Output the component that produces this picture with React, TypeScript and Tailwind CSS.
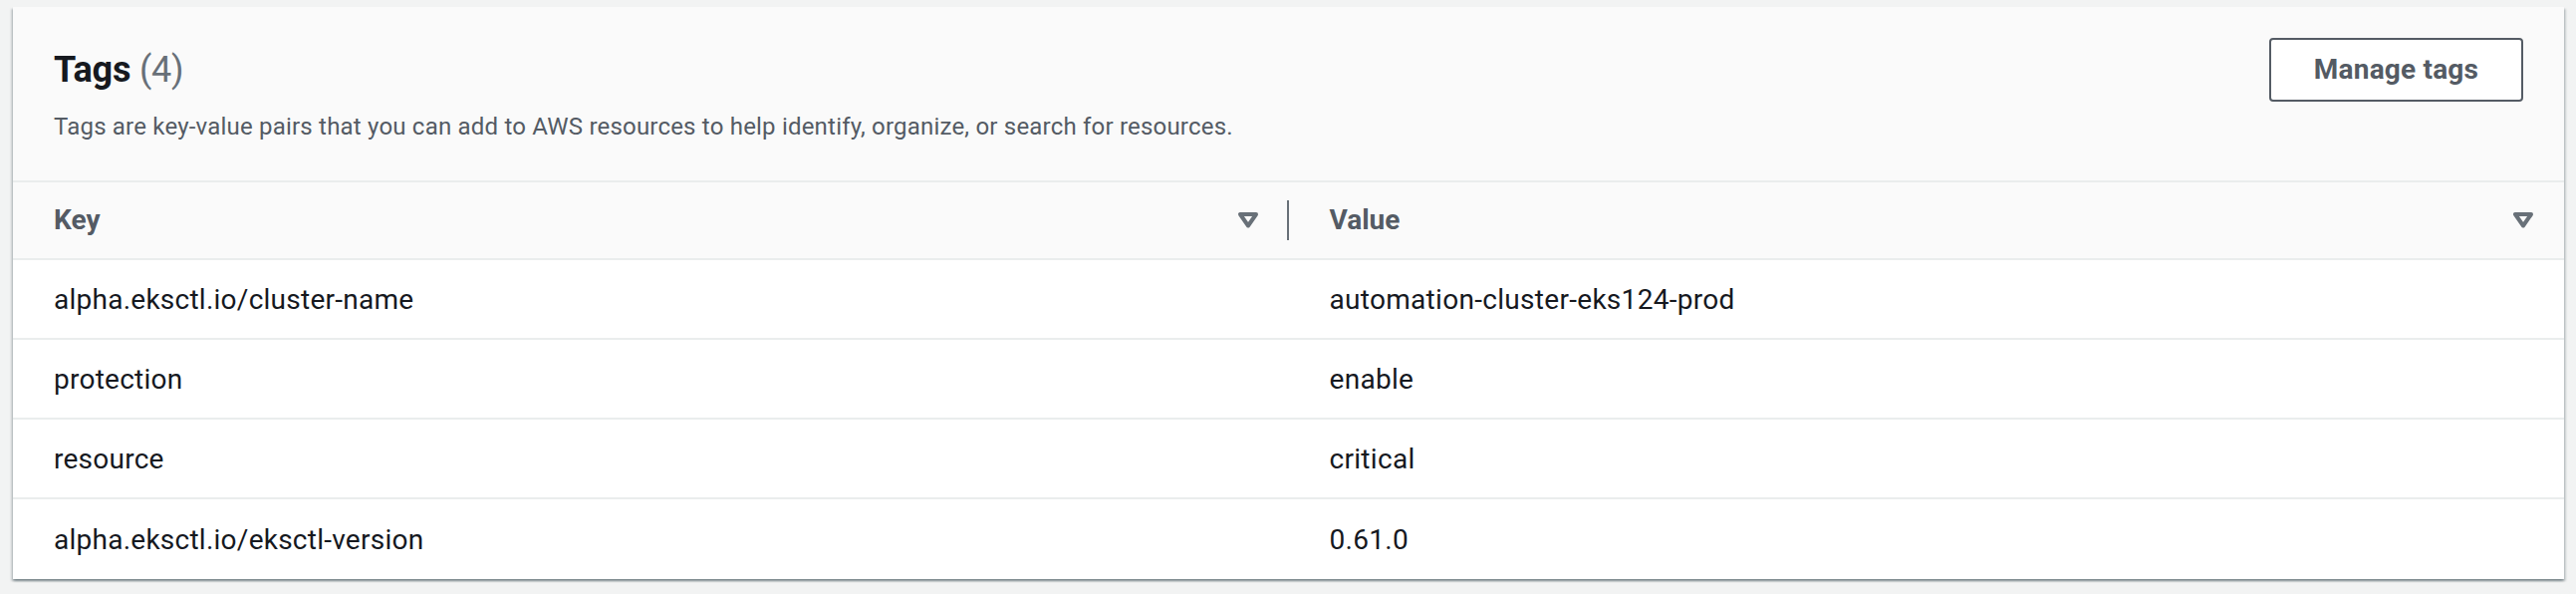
import React from "react";

const rows: [string, string][] = [
  ["alpha.eksctl.io/cluster-name", "automation-cluster-eks124-prod"],
  ["protection", "enable"],
  ["resource", "critical"],
  ["alpha.eksctl.io/eksctl-version", "0.61.0"],
];

function Caret() {
  return (
    <svg width="22" height="18" viewBox="0 0 22 18" className="shrink-0">
      <polygon
        points="3,3 19,3 11,14.5"
        fill="none"
        stroke="#687078"
        strokeWidth="4"
        strokeLinejoin="round"
      />
    </svg>
  );
}

export default function App() {
  return (
    <div
      className="h-[596px] w-full overflow-hidden bg-[#f2f3f3] pt-[7px] pl-[13px] pr-[12px]"
      style={{ fontFamily: "Roboto, 'Open Sans', Arial, sans-serif" }}
    >
      <div className="bg-white shadow-[0_2px_2px_0_rgba(0,28,36,0.3),2px_2px_2px_0_rgba(0,28,36,0.15),-2px_2px_2px_0_rgba(0,28,36,0.15)]">
        {/* Header */}
        <div className="flex h-[176px] items-start justify-between border-b-2 border-[#eaeded] bg-[#fafafa] pl-[41px] pr-[41px] pt-[31px]">
          <div className="pt-[10px]">
            <h2 className="h-[44px] text-[36px] leading-[44px] font-bold tracking-[-0.2px] text-[#16191f]">
              Tags <span className="font-normal text-[#687078]">(4)</span>
            </h2>
            <p className="mt-[19px] text-[24px] leading-[32px] tracking-[0.2px] text-[#545b64]">
              Tags are key-value pairs that you can add to AWS resources to help identify, organize, or search for resources.
            </p>
          </div>
          <button className="h-[64px] w-[255px] rounded-[4px] border-2 border-[#545b64] bg-white text-[28px] leading-[36px] font-bold tracking-[0.2px] text-[#545b64]">
            Manage tags
          </button>
        </div>

        {/* Table header */}
        <div className="grid h-[78px] grid-cols-2 border-b-2 border-[#eaeded] bg-[#fafafa]">
          <div className="flex items-center pl-[41px]">
            <span className="flex-1 text-[28px] leading-[40px] font-bold text-[#545b64]">Key</span>
            <Caret />
            <div className="ml-[28px] h-[40px] w-[2px] bg-[#687078]" />
          </div>
          <div className="flex items-center pl-[41px] pr-[30px]">
            <span className="flex-1 text-[28px] leading-[40px] font-bold text-[#545b64]">Value</span>
            <Caret />
          </div>
        </div>

        {/* Rows */}
        {rows.map(([k, v], i) => (
          <div
            key={k}
            className={
              i < rows.length - 1
                ? "grid h-[80px] grid-cols-2 border-b-2 border-[#eaeded] bg-white"
                : "grid h-[80px] grid-cols-2 bg-white"
            }
          >
            <div className="flex items-center pl-[41px] pt-[2px] text-[28px] leading-[40px] tracking-[0.25px] text-[#16191f]">{k}</div>
            <div className="flex items-center pl-[41px] pt-[2px] text-[28px] leading-[40px] tracking-[0.3px] text-[#16191f]">{v}</div>
          </div>
        ))}
      </div>
    </div>
  );
}
